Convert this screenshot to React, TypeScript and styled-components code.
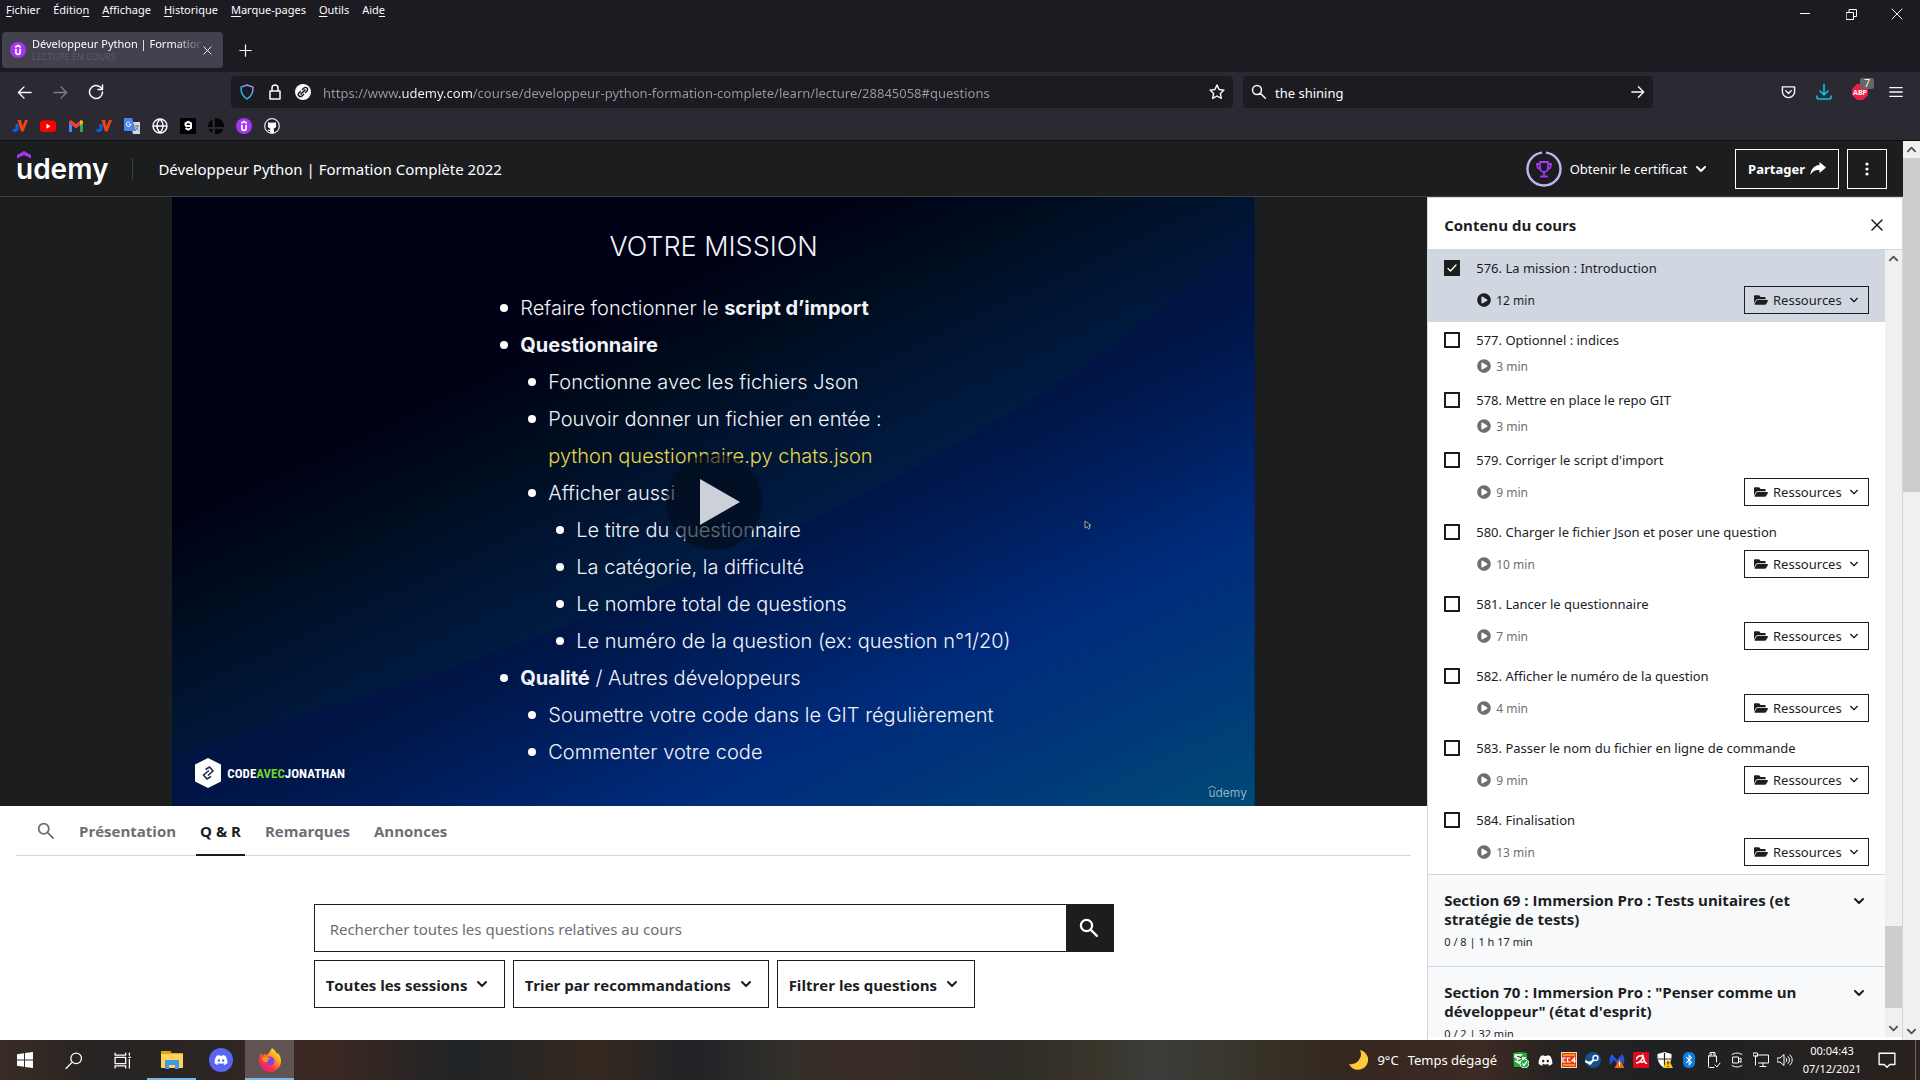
import React from 'react';
import styled, { createGlobalStyle, css } from 'styled-components';
import { FaBluetoothB, FaDiscord, FaFolderOpen, FaPlayCircle } from 'react-icons/fa';

const ui = '"Noto Sans", "Open Sans", sans-serif';
const heading = '"Open Sans", "Noto Sans", sans-serif';

const GlobalStyle = createGlobalStyle`
  *, *::before, *::after { box-sizing: border-box; }
  body { margin: 0; font-family: ${ui}; overflow: hidden; background: #fff; color: #1c1d1f; }
  button, input, select { font: inherit; color: inherit; margin: 0; padding: 0; border: 0; background: none; border-radius: 0; }
  input:focus, select:focus { outline: none; }
  svg { display: block; flex: none; }
  ul, h1, h2, h3, p { margin: 0; padding: 0; list-style: none; font-size: inherit; }
  a { color: inherit; text-decoration: none; }
`;

/* ---------- window ---------- */
const Desktop = styled.div`
  display: flex;
  flex-direction: column;
  height: 100vh;
`;
const Chrome = styled.header`
  flex: none;
  background: #1c1b22;
  color: #fbfbfe;
  border-bottom: 1px solid #0c0c0d;
`;
const TitleRow = styled.div`
  display: flex;
  justify-content: space-between;
  height: 28px;
`;
const MenuBar = styled.nav`
  display: flex;
  gap: 13px;
  padding-left: 6px;
  font-size: 11px;
  line-height: 20px;
  height: 20px;
  u { text-underline-offset: 2px; }
`;
const WindowControls = styled.div`
  display: flex;
`;
const WindowButton = styled.button`
  display: grid;
  place-items: center;
  width: 46px;
  height: 28px;
`;
const TabStrip = styled.div`
  display: flex;
  align-items: center;
  gap: 10px;
  height: 44px;
  padding-left: 2px;
`;
const BrowserTab = styled.div`
  display: flex;
  align-items: center;
  width: 221px;
  height: 36px;
  padding: 0 10px 0 8px;
  border-radius: 4px;
  background: #42414d;
`;
const TabLabel = styled.div`
  flex: 1;
  min-width: 0;
  margin-left: 6px;
  white-space: nowrap;
`;
const TabTitle = styled.div`
  font-size: 11px;
  line-height: 14px;
  mask-image: linear-gradient(to right, #000 84%, transparent 102%);
`;
const TabStatus = styled.div`
  font-size: 9px;
  line-height: 12px;
  color: #5b5a66;
`;
const IconButton = styled.button<{ $size?: number; $dim?: boolean }>`
  display: grid;
  place-items: center;
  position: relative;
  width: ${p => p.$size ?? 36}px;
  height: ${p => p.$size ?? 36}px;
  opacity: ${p => (p.$dim ? 0.4 : 1)};
`;
const NavBar = styled.div`
  display: grid;
  grid-template-columns: auto 117fr 1002fr 10px 410fr 117fr auto;
  align-items: center;
  height: 40px;
  padding: 0 6px;
  background: #2b2a33;
`;
const NavGroup = styled.div<{ $col: number }>`
  display: flex;
  grid-column: ${p => p.$col};
`;
const Field = styled.label<{ $col: number }>`
  grid-column: ${p => p.$col};
  display: flex;
  align-items: center;
  gap: 12px;
  height: 32px;
  min-width: 0;
  padding: 0 8px;
  border-radius: 4px;
  background: #1c1b22;
  font-size: 13px;
`;
const SearchField = styled(Field)`
  gap: 8px;
`;
const FieldInput = styled.input`
  flex: 1;
  min-width: 0;
  height: 32px;
  padding-top: 2px;
`;
const UrlInput = styled(FieldInput)`
  color: transparent;
  background: linear-gradient(to right, #9a99a3 76px, #fbfbfe 76px, #fbfbfe 149px, #9a99a3 149px);
  background-clip: text;
  -webkit-background-clip: text;
`;
const BlockCount = styled.span`
  position: absolute;
  top: 4px;
  right: 4px;
  width: 14px;
  height: 11px;
  border-radius: 2px;
  background: #666;
  font-size: 10px;
  line-height: 11px;
  text-align: center;
`;
const Bookmarks = styled.nav`
  display: flex;
  align-items: center;
  gap: 12px;
  height: 28px;
  padding-left: 12px;
  background: #2b2a33;
  a { display: block; width: 16px; height: 16px; }
`;

/* ---------- page ---------- */
const Page = styled.div`
  flex: 1;
  display: flex;
  min-height: 0;
`;
const Site = styled.div`
  flex: 1;
  display: flex;
  flex-direction: column;
  min-width: 0;
`;
const SiteHeader = styled.header`
  display: flex;
  align-items: center;
  flex: none;
  height: 56px;
  padding: 0 16px;
  background: #1c1d1f;
  border-bottom: 1px solid #3e4143;
  color: #fff;
`;
const Brand = styled.a`
  position: relative;
  padding-right: 24px;
  font-family: Inter, sans-serif;
  font-weight: 600;
  font-size: 28px;
  line-height: 32px;
  svg { position: absolute; top: -2px; left: 0; }
`;
const CourseTitle = styled.h1`
  flex: 1;
  padding-left: 25px;
  border-left: 1px solid #3e4143;
  font-size: 15px;
  font-weight: 400;
  line-height: 22px;
`;
const Certificate = styled.button`
  display: flex;
  align-items: center;
  gap: 8px;
  margin-right: 28px;
  font-size: 13px;
`;
const OutlineButton = styled.button<{ $square?: boolean }>`
  display: flex;
  align-items: center;
  justify-content: center;
  gap: 5px;
  height: 40px;
  width: ${p => (p.$square ? '40px' : 'auto')};
  padding: 0 ${p => (p.$square ? 0 : 12)}px;
  margin-left: ${p => (p.$square ? 8 : 0)}px;
  border: 1px solid #fff;
  font-size: 13px;
  font-weight: 700;
`;
const Columns = styled.div`
  flex: 1;
  display: flex;
  min-height: 0;
`;
const Main = styled.main`
  flex: none;
  width: 75%;
  background: #fff;
`;
const Player = styled.section`
  display: flex;
  justify-content: center;
  height: calc(100vh - 471px);
  background: #1c1d1f;
`;
const Slide = styled.div`
  position: relative;
  height: 100%;
  aspect-ratio: 16 / 9;
  overflow: hidden;
  color: #f2f3f8;
  font-family: Inter, sans-serif;
`;
const Backdrop = styled.svg`
  position: absolute;
  inset: 0;
  width: 100%;
  height: 100%;
`;
const SlideBody = styled.div`
  position: relative;
  padding-top: 30px;
`;
const SlideTitle = styled.h2`
  text-align: center;
  font-size: 27px;
  font-weight: 300;
  line-height: 40px;
  margin-bottom: 22px;
`;
const SlideLine = styled.li<{ $level: number; $plain?: boolean }>`
  display: flex;
  align-items: center;
  height: 37px;
  padding-left: ${p => 300 + p.$level * 28}px;
  font-size: 20px;
  font-weight: 300;
  white-space: pre;
  color: ${p => (p.$plain ? '#e6d84a' : 'inherit')};
  b { font-weight: 700; }
  &::before {
    content: '';
    width: 8px;
    height: 8px;
    margin-right: 12px;
    border-radius: 50%;
    background: ${p => (p.$plain ? 'transparent' : '#fff')};
  }
`;
const PlayButton = styled.button`
  position: absolute;
  left: 50%;
  top: 50%;
  width: 96px;
  height: 96px;
  margin: -48px 0 0 -48px;
  border-radius: 50%;
  background: rgba(4, 10, 24, 0.6);
  svg { margin-left: 34px; }
`;
const Author = styled.div`
  position: absolute;
  left: 22px;
  bottom: 18px;
  display: flex;
  align-items: center;
  gap: 5px;
  font-family: "Roboto Condensed", Roboto, sans-serif;
  font-weight: 700;
  font-size: 13px;
  color: #fff;
  em { font-style: normal; color: #6fd32a; }
`;
const Watermark = styled.div`
  position: absolute;
  right: 8px;
  bottom: 4px;
  font-size: 12px;
  line-height: 18px;
  color: #8fb0c4;
  svg { position: absolute; left: 0; top: 1px; }
`;
const Cursor = styled.svg`
  position: absolute;
  left: 84.2%;
  top: 53%;
`;
const Tabs = styled.nav`
  display: flex;
  align-items: stretch;
  gap: 4px;
  height: 50px;
  margin: 0 16px;
  padding-left: 11px;
  border-bottom: 1px solid #d1d7dc;
`;
const TabButton = styled.button<{ $active?: boolean }>`
  height: 50px;
  padding: 2px 4px 0;
  margin: 0 6px;
  border-bottom: 2px solid ${p => (p.$active ? '#1c1d1f' : 'transparent')};
  color: ${p => (p.$active ? '#1c1d1f' : '#6a6f73')};
  font-family: ${heading};
  font-size: 15px;
  font-weight: 700;
`;
const Questions = styled.section`
  max-width: 800px;
  margin: 48px auto 0;
`;
const QuestionSearch = styled.form`
  display: flex;
  height: 48px;
  margin-bottom: 8px;
  border: 1px solid #1c1d1f;
`;
const QuestionInput = styled.input`
  flex: 1;
  padding: 2px 15px 0;
  font-size: 15px;
  &::placeholder { color: #6a6f73; opacity: 1; }
`;
const SubmitButton = styled.button`
  display: grid;
  place-items: center;
  width: 47px;
  background: #1c1d1f;
  color: #fff;
`;
const Filters = styled.div`
  display: flex;
  gap: 8px;
`;
const FilterBox = styled.label`
  display: flex;
  align-items: center;
  gap: 8px;
  height: 48px;
  padding: 0 16px 0 11px;
  border: 1px solid #1c1d1f;
  font-family: ${heading};
  font-size: 15px;
  font-weight: 700;
  select { appearance: none; height: 46px; padding-top: 2px; }
  svg { pointer-events: none; }
`;

/* ---------- course contents ---------- */
const Sidebar = styled.aside`
  flex: 1;
  display: flex;
  flex-direction: column;
  min-width: 0;
  padding-bottom: 3px;
  border: 1px solid #d1d7dc;
  border-bottom: 0;
  background: #fff;
`;
const SidebarHead = styled.div`
  display: flex;
  flex: none;
  align-items: center;
  justify-content: space-between;
  height: 52px;
  padding: 2px 17px 0 16px;
  border-bottom: 1px solid #d1d7dc;
  font-family: ${heading};
  font-size: 15px;
`;
const SidebarBody = styled.div`
  flex: 1;
  display: flex;
  min-height: 0;
`;
const Contents = styled.div`
  flex: 1;
  min-width: 0;
  overflow: hidden;
`;
const Lecture = styled.li<{ $current?: boolean; $tall?: boolean }>`
  display: flex;
  gap: 16px;
  height: ${p => (p.$tall ? 72 : 60)}px;
  padding: 8px 16px;
  background: ${p => (p.$current ? '#d1d7e0' : '#fff')};
  font-size: 13px;
`;
const Tick = styled.span`
  position: relative;
  flex: none;
  width: 16px;
  height: 16px;
  margin-top: 2px;
  color: #fff;
  input {
    appearance: none;
    display: block;
    width: 16px;
    height: 16px;
    border: 2px solid #1c1d1f;
    background: #fff;
  }
  input:checked { background: #1c1d1f; }
  svg { position: absolute; top: 3px; left: 3px; pointer-events: none; }
`;
const LectureBody = styled.div`
  flex: 1;
  min-width: 0;
`;
const LectureTitle = styled.label`
  display: block;
  line-height: 20px;
  white-space: nowrap;
`;
const LectureMeta = styled.div<{ $current?: boolean; $tall?: boolean }>`
  display: flex;
  align-items: center;
  gap: 5px;
  height: ${p => (p.$tall ? 28 : 16)}px;
  margin-top: 8px;
  padding-left: 1px;
  font-size: 12px;
  color: ${p => (p.$current ? '#1c1d1f' : '#6a6f73')};
`;
const ResourceButton = styled.button`
  display: flex;
  align-items: center;
  gap: 5px;
  width: 125px;
  height: 28px;
  margin-left: auto;
  padding-left: 9px;
  border: 1px solid #1c1d1f;
  color: #1c1d1f;
  font-size: 13px;
  svg:last-child { margin-left: 2px; }
`;
const Section = styled.section`
  display: flex;
  justify-content: space-between;
  padding: 16px 20px 16px 16px;
  border-top: 1px solid #d1d7dc;
  background: #f7f9fa;
  h3 { width: 360px; font-family: ${heading}; font-size: 15px; line-height: 19px; }
  p { margin-top: 4px; font-size: 11px; line-height: 17px; }
  svg { margin-top: 4px; }
`;

/* ---------- scroll bars ---------- */
const Track = styled.div`
  flex: none;
  display: flex;
  flex-direction: column;
  align-items: center;
  width: 17px;
  background: #f0f0f0;
  color: #505050;
  svg { margin: 3px 0; }
`;
const Space = styled.div<{ $grow: number; $thumb?: boolean }>`
  flex: ${p => p.$grow} 1 0;
  width: 17px;
  ${p => p.$thumb && css`background: #cdcdcd;`}
`;

/* ---------- task bar ---------- */
const TaskBar = styled.footer`
  display: flex;
  flex: none;
  justify-content: space-between;
  height: 40px;
  color: #fff;
  background: linear-gradient(to right, #3a2c25 0, #262322 5%, #2b2523 11%, #3d2822 17%, #1f2326 24%, #36291f 31%, #202226 36%, #33302b 41%, #3b2c26 45%, #2f2c27 52%, #38342a 57%, #3b3e3b 60%, #38342a 65%, #33271f 70%, #3d2a23 77%, #262322 81%, #1f2123 86%, #29221e 100%);
`;
const TaskGroup = styled.div`
  display: flex;
  align-items: center;
`;
const TaskButton = styled.button<{ $open?: boolean; $active?: boolean }>`
  display: grid;
  place-items: center;
  width: 49px;
  height: 40px;
  background: ${p => (p.$active ? '#5f5451' : 'transparent')};
  box-shadow: ${p => (p.$open ? 'inset 0 -2px #76b9ed' : 'none')};
`;
const Weather = styled.button`
  display: flex;
  align-items: center;
  gap: 9px;
  margin-right: 12px;
  font-size: 13px;
`;
const TrayButton = styled.button`
  display: grid;
  place-items: center;
  width: 24px;
  height: 40px;
`;
const Clock = styled.div`
  width: 70px;
  font-size: 11px;
  line-height: 18px;
  text-align: center;
`;
const NoticeButton = styled(TrayButton)`
  width: 40px;
  margin-right: 8px;
`;
const DesktopEdge = styled.div`
  width: 5px;
  height: 40px;
  border-left: 1px solid #6b6663;
`;

/* ---------- icons ---------- */
type Line = { d: string; s?: number; w?: number; box?: number; fill?: string; color?: string };
const Glyph = ({ d, s = 16, w = 1, box = 16, fill = 'none', color = 'currentColor' }: Line) => (
  <svg width={s} height={s} viewBox={`0 0 ${box} ${box}`} fill={fill} stroke={color} strokeWidth={w} strokeLinecap="round" strokeLinejoin="round">
    <path d={d} />
  </svg>
);
const Chevron = ({ s = 12, w = 2 }: { s?: number; w?: number }) => <Glyph s={s} w={w} box={12} d="M2 4l4 4 4-4" />;
const Magnifier = ({ s = 16, w = 1.5 }: { s?: number; w?: number }) => (
  <Glyph s={s} w={w} d="M6 1.5a4.5 4.5 0 1 1 0 9a4.5 4.5 0 0 1 0-9M9.3 9.3l5 5" />
);
const Cross = ({ s = 12, w = 1.2 }: { s?: number; w?: number }) => <Glyph s={s} w={w} box={12} d="M1 1l10 10M11 1L1 11" />;
const UdemyBadge = () => (
  <svg width="16" height="16" viewBox="0 0 16 16" fill="none">
    <circle cx="8" cy="8" r="8" fill="#a435f0" />
    <path d="M5.200 5.200L8 3.600l2.800 1.600M5.900 6.800v3.400a2.100 2.100 0 0 0 4.200 0V6.800" stroke="#fff" strokeWidth="1.700" />
  </svg>
);
const JvBadge = () => (
  <svg width="16" height="16" viewBox="0 0 16 16">
    <path d="M3.500 6H6.500V11c0 3-4 4-6.500 2l1.500-2.500c1 .7 2 .5 2-.5z" fill="#0a5fe0" />
    <path d="M5.500 2H9l1.500 6.500L13 2h3l-4.500 11.500H9z" fill="#f4420f" />
  </svg>
);
const Trophy = () => (
  <svg width="36" height="36" viewBox="0 0 36 36" fill="none">
    <circle cx="18" cy="18" r="16.500" stroke="#c0b4f5" strokeWidth="2.400" strokeDasharray="99 4.500" strokeDashoffset="-2" transform="rotate(-90 18 18)" />
    <path d="M14 11h8v6a4 4 0 0 1-8 0zM14 13h-3c0 3 1 5 3.500 5M22 13h3c0 3-1 5-3.500 5M18 21v4M14 25.500h8" stroke="#a435f0" strokeWidth="1.800" />
  </svg>
);

const lectures = [
  { id: 576, title: 'La mission : Introduction', time: 12, res: true, current: true },
  { id: 577, title: 'Optionnel : indices', time: 3 },
  { id: 578, title: 'Mettre en place le repo GIT', time: 3 },
  { id: 579, title: "Corriger le script d'import", time: 9, res: true },
  { id: 580, title: 'Charger le fichier Json et poser une question', time: 10, res: true },
  { id: 581, title: 'Lancer le questionnaire', time: 7, res: true },
  { id: 582, title: 'Afficher le numéro de la question', time: 4, res: true },
  { id: 583, title: 'Passer le nom du fichier en ligne de commande', time: 9, res: true },
  { id: 584, title: 'Finalisation', time: 13, res: true },
];
const menus = [['', 'F', 'ichier'], ['Éditio', 'n', ''], ['', 'A', 'ffichage'], ['', 'H', 'istorique'], ['', 'M', 'arque-pages'], ['', 'O', 'utils'], ['Aid', 'e', '']];
const slide: { level: number; plain?: boolean; text: React.ReactNode }[] = [
  { level: 1, text: <span>Refaire fonctionner le <b>script d’import</b></span> },
  { level: 1, text: <b>Questionnaire</b> },
  { level: 2, text: 'Fonctionne avec les fichiers Json' },
  { level: 2, text: 'Pouvoir donner un fichier en entée :' },
  { level: 2, plain: true, text: 'python questionnaire.py chats.json' },
  { level: 2, text: 'Afficher aussi' },
  { level: 3, text: 'Le titre du questionnaire' },
  { level: 3, text: 'La catégorie, la difficulté' },
  { level: 3, text: 'Le nombre total de questions' },
  { level: 3, text: 'Le numéro de la question (ex: question n°1/20)' },
  { level: 1, text: <span><b>Qualité</b> / Autres développeurs</span> },
  { level: 2, text: 'Soumettre votre code dans le GIT régulièrement' },
  { level: 2, text: 'Commenter votre code' },
];

const ScrollBar = ({ before, thumb, after }: { before: number; thumb: number; after: number }) => (
  <Track>
    <Glyph s={11} w={2} box={12} d="M2 8l4-4 4 4" />
    <Space $grow={before} />
    <Space $grow={thumb} $thumb />
    <Space $grow={after} />
    <Chevron s={11} />
  </Track>
);

const BrowserChrome = () => (
  <Chrome>
    <TitleRow>
      <MenuBar>{menus.map(([a, k, b]) => <span key={a + k + b}>{a}<u>{k}</u>{b}</span>)}</MenuBar>
      <WindowControls>
        <WindowButton aria-label="Réduire"><Glyph s={10} box={10} d="M0 4.500h10" /></WindowButton>
        <WindowButton aria-label="Restaurer"><Glyph s={11} box={11} d="M.5 3.500h7v7h-7zM3 3V.5h7.500v7H8" /></WindowButton>
        <WindowButton aria-label="Fermer"><Cross w={1} /></WindowButton>
      </WindowControls>
    </TitleRow>
    <TabStrip>
      <BrowserTab>
        <UdemyBadge />
        <TabLabel>
          <TabTitle>Développeur Python | Formation</TabTitle>
          <TabStatus>LECTURE EN COURS</TabStatus>
        </TabLabel>
        <IconButton $size={12} aria-label="Fermer l'onglet"><Cross s={9} /></IconButton>
      </BrowserTab>
      <IconButton $size={24} aria-label="Nouvel onglet"><Glyph s={13} w={1.5} d="M8 1v14M1 8h14" /></IconButton>
    </TabStrip>
    <NavBar>
      <NavGroup $col={1}>
        <IconButton aria-label="Précédent"><Glyph s={15} w={1.5} d="M15 8H1.500M7.500 2l-6 6 6 6" /></IconButton>
        <IconButton $dim aria-label="Suivant"><Glyph s={15} w={1.5} d="M1 8h13.500M8.500 2l6 6-6 6" /></IconButton>
        <IconButton aria-label="Actualiser"><Glyph w={1.5} d="M14.500 8a6.500 6.500 0 1 1-2-4.700l1.700 1.700M14.500 1v4.500H10" /></IconButton>
      </NavGroup>
      <Field $col={3}>
        <svg width="16" height="16" viewBox="0 0 16 16">
          <defs><linearGradient id="shield" x1="0" y1="1" x2="1" y2="0"><stop offset=".3" stopColor="#2ac3ea" /><stop offset="1" stopColor="#b490f5" /></linearGradient></defs>
          <path d="M8 1l6 2.200c.3 5-1.500 9-6 11.800C3.500 12.200 1.700 8.200 2 3.200z" fill="none" stroke="url(#shield)" strokeWidth="1.400" strokeLinejoin="round" />
        </svg>
        <Glyph w={1.5} d="M3 7h10v8H3zM5 7V4a3 3 0 0 1 6 0v3" />
        <svg width="16" height="16" viewBox="0 0 16 16"><circle cx="8" cy="8" r="8" fill="#fbfbfe" /><path d="M5.500 10.500l5-5M7 6l2-2a2 2 0 0 1 3 3l-2 2M9 10l-2 2a2 2 0 0 1-3-3l2-2" stroke="#1c1b22" strokeWidth="1.500" fill="none" /></svg>
        <UrlInput aria-label="Adresse" defaultValue="https://www.udemy.com/course/developpeur-python-formation-complete/learn/lecture/28845058#questions" />
        <Glyph w={1.4} d="M8 1l2.100 4.500 4.900.6-3.600 3.400.9 4.900L8 12l-4.300 2.400.9-4.900L1 6.100l4.900-.6z" />
      </Field>
      <SearchField $col={5}>
        <Magnifier />
        <FieldInput aria-label="Recherche" defaultValue="the shining" />
        <Glyph s={14} w={1.6} d="M1 8h13.500M8.500 2l6 6-6 6" />
      </SearchField>
      <NavGroup $col={7}>
        <IconButton aria-label="Pocket"><Glyph s={15} w={1.5} d="M1.500 2h13v5a6.500 6.500 0 0 1-13 0zM5 6l3 3 3-3" /></IconButton>
        <IconButton aria-label="Téléchargements"><Glyph w={1.6} color="#00cbe6" d="M8 0v11M4 7l4 4 4-4M1 12v1.500a1.500 1.500 0 0 0 1.500 1.500h11a1.500 1.500 0 0 0 1.500-1.500V12" /></IconButton>
        <IconButton aria-label="Adblock Plus">
          <svg width="16" height="16" viewBox="0 0 16 16"><path d="M5 0h6l5 5v6l-5 5H5l-5-5V5z" fill="#ed1e45" /><text x="8" y="11" fontSize="7" fontWeight="700" fill="#fff" textAnchor="middle">ABP</text></svg>
          <BlockCount>7</BlockCount>
        </IconButton>
        <IconButton aria-label="Menu"><Glyph s={14} w={1.6} d="M1 3h14M1 8h14M1 13h14" /></IconButton>
      </NavGroup>
    </NavBar>
    <Bookmarks>
      <a href="#jv" aria-label="jeuxvideo"><JvBadge /></a>
      <a href="#youtube" aria-label="YouTube">
        <svg width="16" height="16" viewBox="0 0 16 16"><rect y="2.500" width="16" height="11.500" rx="3" fill="#f00" /><path d="M6.500 5.800v5L10.500 8.300z" fill="#fff" /></svg>
      </a>
      <a href="#gmail" aria-label="Gmail">
        <svg width="16" height="16" viewBox="0 0 16 16"><path d="M1 3v11h3V7z" fill="#4285f4" /><path d="M15 3v11h-3V7z" fill="#34a853" /><path d="M1 3.500L3 2l5 4 5-4 2 1.500V5L8 10.500 1 5z" fill="#ea4335" /><path d="M12 3l1.500-1L15 3.500V5l-3 2.500z" fill="#fbbc04" /></svg>
      </a>
      <a href="#jv2" aria-label="jeuxvideo forum"><JvBadge /></a>
      <a href="#translate" aria-label="Traduction">
        <svg width="16" height="16" viewBox="0 0 16 16"><path d="M6 4h10v12H9z" fill="#d5d8dc" /><path d="M0 0h8l4 13H0z" fill="#4a86ee" /><path d="M6.200 4.800a2.200 2.200 0 1 0 .6 1.700H4.800" stroke="#fff" fill="none" /><path d="M10.500 8h4.500M12.700 7v1M14 8c-.5 2-2 3.500-2.500 4M12 9.500l2.500 3" stroke="#777" fill="none" /></svg>
      </a>
      <a href="#web" aria-label="Web"><Glyph w={1.4} d="M8 1a7 7 0 1 0 0 14A7 7 0 1 0 8 1M1 8h14M8 1C4 5 4 11 8 15C12 11 12 5 8 1" /></a>
      <a href="#9gag" aria-label="9gag">
        <svg width="16" height="16" viewBox="0 0 16 16"><rect width="16" height="16" rx="1" fill="#000" /><path d="M11 8H7a1.500 1.500 0 0 1-1.500-1.500v-1.200L8.200 3.800 11 5.300V10l-2.800 1.700L5.500 10.200" stroke="#fff" strokeWidth="2" fill="none" /></svg>
      </a>
      <a href="#cercle" aria-label="Cercle">
        <svg width="16" height="16" viewBox="0 0 16 16"><path d="M7 0h1a8 8 0 0 1 8 9H7zM7 11h8.500A8 8 0 0 1 8 16H7zM4.500 1.500V9H0A8 8 0 0 1 4.500 1.500zM.5 11h4v3.500A7 7 0 0 1 .5 11" fill="#060608" /></svg>
      </a>
      <a href="#udemy" aria-label="Udemy"><UdemyBadge /></a>
      <a href="#github" aria-label="GitHub">
        <svg width="16" height="16" viewBox="0 0 16 16"><circle cx="8" cy="8" r="7.300" fill="#1a1a20" stroke="#e8e8ee" strokeWidth="1.200" /><path d="M4 4l2 .8a8 8 0 0 1 4 0L12 4v2.500c1 2-.2 3.700-2.500 4.200.5.500.5 1.300.5 4.300H6v-2c-1.500.3-2-.5-2.500-1.500l2.500.5.500-1.300C4.200 10.200 3 8.500 4 6.500z" fill="#fff" /></svg>
      </a>
    </Bookmarks>
  </Chrome>
);

const VideoPlayer = () => (
  <Player>
    <Slide>
      <Backdrop viewBox="0 0 1083 609" preserveAspectRatio="none">
        <defs>
          <linearGradient id="upper" gradientUnits="userSpaceOnUse" x1="0" y1="0" x2="455" y2="960">
            <stop offset=".27" stopColor="#000014" /><stop offset=".36" stopColor="#000d1f" /><stop offset=".45" stopColor="#001534" /><stop offset=".54" stopColor="#001c45" />
          </linearGradient>
          <linearGradient id="lower" gradientUnits="userSpaceOnUse" x1="0" y1="0" x2="455" y2="960">
            <stop offset=".42" stopColor="#001238" /><stop offset=".54" stopColor="#001648" /><stop offset=".72" stopColor="#002b7c" /><stop offset=".86" stopColor="#003c78" /><stop offset="1" stopColor="#004f76" />
          </linearGradient>
        </defs>
        <path d="M0 0h1083v609H0z" fill="url(#upper)" />
        <path d="M0 556Q310 470 545 368Q900 210 1083 28V609H0z" fill="url(#lower)" />
      </Backdrop>
      <SlideBody>
        <SlideTitle>VOTRE MISSION</SlideTitle>
        <ul>{slide.map((l, i) => <SlideLine key={i} $level={l.level} $plain={l.plain}>{l.text}</SlideLine>)}</ul>
      </SlideBody>
      <Author>
        <svg width="28" height="30" viewBox="0 0 28 30"><path d="M14 0l13 6.500v17L14 30 1 23.500v-17z" fill="#fff" /><path d="M11.500 11.500l4-2.500 3.500 4-5 4.500M15 12.500L9.500 17l3.500 4 4-2.500" stroke="#232c4c" strokeWidth="1.600" fill="none" /></svg>
        <span>CODE<em>AVEC</em>JONATHAN</span>
      </Author>
      <Watermark>
        <svg width="8" height="4" viewBox="0 0 8 4" fill="none" stroke="#8fb0c4"><path d="M0 3.500L4 1l4 2.500" /></svg>
        udemy
      </Watermark>
      <Cursor width="8" height="10" viewBox="0 0 8 10"><path d="M1 1v7l2-1.500L4.500 9 6 8 5 5.500h2z" fill="#101828" stroke="#9aa4b8" /></Cursor>
      <PlayButton aria-label="Lire">
        <svg width="40" height="46" viewBox="0 0 40 46"><path d="M0 0l40 23L0 46z" fill="#ccd0d9" /></svg>
      </PlayButton>
    </Slide>
  </Player>
);

const CourseContents = () => (
  <Sidebar>
    <SidebarHead>
      <h2>Contenu du cours</h2>
      <IconButton $size={16} aria-label="Fermer"><Cross w={1.500} /></IconButton>
    </SidebarHead>
    <SidebarBody>
      <Contents>
        <ul>
          {lectures.map(l => (
            <Lecture key={l.id} $current={l.current} $tall={l.res}>
              <Tick>
                <input id={`l${l.id}`} type="checkbox" defaultChecked={l.current} />
                {l.current && <Glyph s={10} box={10} w={1.3} d="M1 5.500l2.500 2.500L9 2" />}
              </Tick>
              <LectureBody>
                <LectureTitle htmlFor={`l${l.id}`}>{l.id}. {l.title}</LectureTitle>
                <LectureMeta $current={l.current} $tall={l.res}>
                  <FaPlayCircle size={14} />
                  <span>{l.time} min</span>
                  {l.res && <ResourceButton><FaFolderOpen size={14} />Ressources<Chevron s={10} w={1.600} /></ResourceButton>}
                </LectureMeta>
              </LectureBody>
            </Lecture>
          ))}
        </ul>
        <Section>
          <div><h3>Section 69 : Immersion Pro : Tests unitaires (et stratégie de tests)</h3><p>0 / 8 | 1 h 17 min</p></div>
          <Chevron />
        </Section>
        <Section>
          <div><h3>Section 70 : Immersion Pro : "Penser comme un développeur" (état d'esprit)</h3><p>0 / 2 | 32 min</p></div>
          <Chevron />
        </Section>
      </Contents>
      <ScrollBar before={657} thumb={82} after={12} />
    </SidebarBody>
  </Sidebar>
);

const WindowsTaskBar = () => (
  <TaskBar>
    <TaskGroup>
      <TaskButton aria-label="Démarrer"><svg width="16" height="16" viewBox="0 0 16 16" fill="#fff"><path d="M0 2.200L7 1.200V7.600H0zM8 1l8-1v7.600H8zM0 8.400h7v6.400L0 13.800zM8 8.400h8V16l-8-1z" /></svg></TaskButton>
      <TaskButton aria-label="Rechercher"><Glyph s={17} w={1.200} d="M10.500 1a5 5 0 1 1 0 10a5 5 0 0 1 0-10M6.800 9.500L1 15.500" /></TaskButton>
      <TaskButton aria-label="Vue des tâches"><Glyph s={17} w={1.200} d="M1 1v2h10V1M1 5h10v6H1zM1 15v-2h10v2M14.500 1v2M14.500 7v8M14 5h1.500" /></TaskButton>
      <TaskButton $open aria-label="Explorateur">
        <svg width="22" height="20" viewBox="0 0 22 20"><path d="M0 1h9l2 2h11v15H0z" fill="#e0a30c" /><path d="M0 4h22v14H0z" fill="#ffd25e" /><path d="M4 19v-9h14v9h-4v-4H8v4z" fill="#3f9be0" /></svg>
      </TaskButton>
      <TaskButton aria-label="Discord">
        <svg width="24" height="24" viewBox="0 0 24 24"><circle cx="12" cy="12" r="12" fill="#5865f2" /><FaDiscord x="5" y="5" size={14} color="#fff" /></svg>
      </TaskButton>
      <TaskButton $open $active aria-label="Firefox">
        <svg width="24" height="24" viewBox="0 0 24 24">
          <defs><linearGradient id="fox" x1="1" y1="0" x2=".2" y2="1"><stop offset="0" stopColor="#fff44f" /><stop offset=".35" stopColor="#ffb01e" /><stop offset=".7" stopColor="#ff3647" /><stop offset="1" stopColor="#e31587" /></linearGradient></defs>
          <path d="M14 0c3 2 4 4 5 6l1-1c2 3 3 5 3 8a11 11 0 0 1-22 0C1 9 2 7 3.500 4.500L4 8l3-2.500 1.500 2C11 6 12 3 14 0z" fill="url(#fox)" />
          <circle cx="12" cy="13" r="4.500" fill="#8a3fe0" /><path d="M4 10c3-2 6-1 8.500 1-2 0-3.500 1-3 3C6.500 15 4 13 4 10z" fill="#ff980e" />
        </svg>
      </TaskButton>
    </TaskGroup>
    <TaskGroup>
      <Weather>
        <svg width="20" height="20" viewBox="0 0 20 20"><path d="M12 0a10 10 0 1 1-11 14A10 10 0 0 0 12 0z" fill="#ffc83d" /></svg>
        <span>9°C</span><span>Temps dégagé</span>
      </Weather>
      <TrayButton aria-label="Antivirus"><svg width="16" height="16" viewBox="0 0 16 16"><path d="M0 1l7-1 7 1v14H1z" fill="#1fae35" /><path d="M2 2l8 0-3 3 6 0-2 3 1 2-6 2-5-3 4-1-4-3z" fill="#eafbe8" /><path d="M4 4l5 2M5 9l4-2" stroke="#222" /><circle cx="11.500" cy="11.500" r="4.500" fill="#1fae4a" stroke="#fff" /><path d="M9.500 11.500l1.500 2 3-4" stroke="#fff" strokeWidth="1.300" fill="none" /></svg></TrayButton>
      <TrayButton aria-label="Discord"><FaDiscord size={15} /></TrayButton>
      <TrayButton aria-label="CCleaner"><svg width="16" height="16" viewBox="0 0 16 16"><rect width="16" height="16" fill="#f3d9c2" /><rect x="1" y="1" width="14" height="14" fill="#e33a17" /><path d="M2 3h12M2 13h12" stroke="#ffb02e" strokeWidth="1.500" /><path d="M5 6H2v4h3M9.500 6h-3v4h3M13.500 11V6L11 9h4" stroke="#fff" strokeWidth="1.200" fill="none" /></svg></TrayButton>
      <TrayButton aria-label="Steam"><svg width="16" height="16" viewBox="0 0 16 16"><circle cx="8" cy="8" r="8" fill="#14508c" /><circle cx="10.500" cy="6" r="2.500" stroke="#fff" strokeWidth="1.300" fill="none" /><path d="M0 9l5 2.500L8.500 8" stroke="#fff" strokeWidth="2.200" fill="none" /><circle cx="5" cy="11" r="1.800" fill="#fff" /></svg></TrayButton>
      <TrayButton aria-label="Malwarebytes"><svg width="16" height="16" viewBox="0 0 16 16"><path d="M1 13C0 8 1 4 3 2l5 6 5-6c3 3 3 7 1 11l-3-5-3 4-3-4z" fill="#1f56d8" /><path d="M10.500 7l5 9h-10z" fill="#f26a1b" /><path d="M10.500 10v4" stroke="#fff" /></svg></TrayButton>
      <TrayButton aria-label="Avira"><svg width="16" height="16" viewBox="0 0 16 16"><path d="M0 0h16v16H0z" fill="#e10a1d" /><path d="M3 11c3.500 0 6-2.500 7-7l1.500 5c.5 2 1.500 2.500 2.500 2M3.500 7.500C3.500 4.500 7 3 10 4M6 9c2 1.500 4 1.500 5.500 0" stroke="#fff" strokeWidth="1.500" fill="none" /></svg></TrayButton>
      <TrayButton aria-label="Sécurité"><svg width="16" height="16" viewBox="0 0 16 16"><path d="M7.500 0l7 2c.5 6-1.500 11-7 14C2 13 0 8 .5 2z" fill="#fff" /><path d="M7.500 1v14M1 7h13" stroke="#222" strokeWidth="1.200" /><path d="M11 6l5 10H6z" fill="#ffc20e" /><path d="M11 9.500v3M11 14v1" stroke="#222" strokeWidth="1.200" /></svg></TrayButton>
      <TrayButton aria-label="Bluetooth"><svg width="16" height="18" viewBox="0 0 16 18"><rect x="2" y="1" width="12" height="16" rx="5" fill="#0b7be0" /><FaBluetoothB x="2" y="3" size={12} color="#fff" /></svg></TrayButton>
      <TrayButton aria-label="USB"><Glyph d="M5 4V.5h5V4M3.500 4h8v6M3.500 4v10.500a1 1 0 0 0 1 1H9M6.500 2v.5M8.500 2v.5M10 13l2 2 3-4" /></TrayButton>
      <TrayButton aria-label="Caméra"><Glyph d="M4 5h5.500v6H4zM9.500 7.500L12 6v4.500L9.500 9M3 2.500C6 .5 10 .5 13 2.500M3 13.500c3 2 7 2 10 0" /></TrayButton>
      <TrayButton aria-label="Réseau"><Glyph d="M4 4.500V3h11.500v8H5.500M10 11v3M7 14.500h6M.5 1h4v3h-4zM2.500 4v9" /></TrayButton>
      <TrayButton aria-label="Volume"><Glyph d="M.5 6h2.500L7 2.500v11L3 10H.5zM9 6c1 1 1 3 0 4M11 4.500c2 2 2 5 0 7M13 3c3 3 3 7 0 10" /></TrayButton>
      <Clock><div>00:04:43</div><div>07/12/2021</div></Clock>
      <NoticeButton aria-label="Notifications"><Glyph s={18} w={1.200} d="M1 2h14v10H10.500L8 14.500 5.500 12H1z" /></NoticeButton>
      <DesktopEdge />
    </TaskGroup>
  </TaskBar>
);

export default function App() {
  return (
    <Desktop>
      <GlobalStyle />
      <BrowserChrome />
      <Page>
        <Site>
          <SiteHeader>
            <Brand href="#accueil">
              <svg width="16" height="8" viewBox="0 0 16 8"><path d="M1 7.500V4L8 0l7 4v3.500L8 4z" fill="#a435f0" /></svg>
              udemy
            </Brand>
            <CourseTitle>Développeur Python | Formation Complète 2022</CourseTitle>
            <Certificate><Trophy />Obtenir le certificat<Chevron /></Certificate>
            <OutlineButton>Partager<svg width="16" height="14" viewBox="0 0 16 14" fill="#fff"><path d="M9.500 0L16 5.500 9.500 11V8C5.500 7.500 2.500 9 .5 13 .5 7.500 4 3.500 9.500 3z" /></svg></OutlineButton>
            <OutlineButton $square aria-label="Plus">
              <svg width="4" height="16" viewBox="0 0 4 16" fill="#fff"><circle cx="2" cy="3" r="1.600" /><circle cx="2" cy="8" r="1.600" /><circle cx="2" cy="13" r="1.600" /></svg>
            </OutlineButton>
          </SiteHeader>
          <Columns>
            <Main>
              <VideoPlayer />
              <Tabs>
                <TabButton aria-label="Rechercher"><Magnifier s={18} w={1.600} /></TabButton>
                <TabButton>Présentation</TabButton>
                <TabButton $active>Q &amp; R</TabButton>
                <TabButton>Remarques</TabButton>
                <TabButton>Annonces</TabButton>
              </Tabs>
              <Questions>
                <QuestionSearch onSubmit={e => e.preventDefault()}>
                  <QuestionInput aria-label="Rechercher" placeholder="Rechercher toutes les questions relatives au cours" />
                  <SubmitButton aria-label="Lancer la recherche"><Magnifier s={20} w={1.800} /></SubmitButton>
                </QuestionSearch>
                <Filters>
                  {['Toutes les sessions', 'Trier par recommandations', 'Filtrer les questions'].map(f => (
                    <FilterBox key={f}><select aria-label={f}><option>{f}</option></select><Chevron /></FilterBox>
                  ))}
                </Filters>
              </Questions>
            </Main>
            <CourseContents />
          </Columns>
        </Site>
        <ScrollBar before={0} thumb={334} after={531} />
      </Page>
      <WindowsTaskBar />
    </Desktop>
  );
}
